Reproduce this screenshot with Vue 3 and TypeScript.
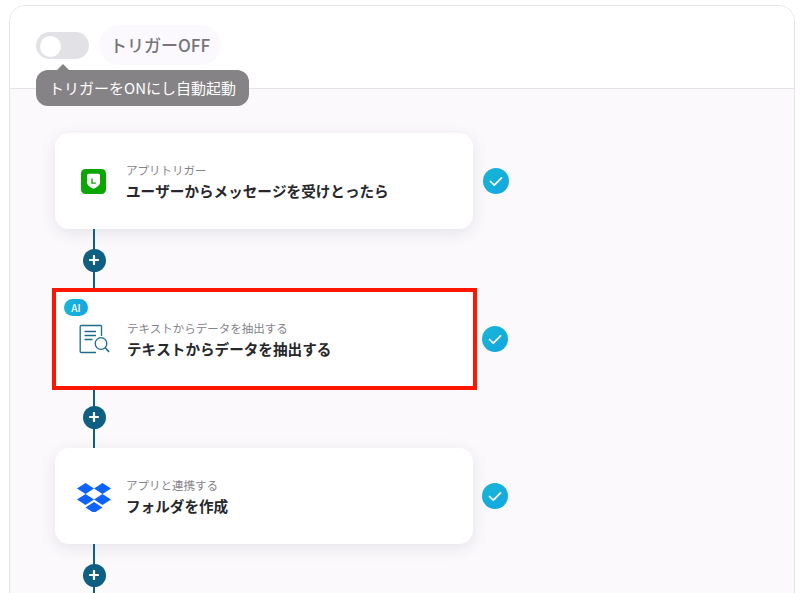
<template>
  <div class="page">
    <section class="panel">
      <header class="panel-head">
        <button class="toggle" type="button" aria-label="トリガー"><span class="knob"></span></button>
        <span class="status">トリガーOFF</span>
        <div class="tooltip">トリガーをONにし自動起動</div>
      </header>
      <div class="flow">
        <template v-for="(step, i) in steps" :key="step.title">
          <div class="step" :class="{ selected: step.selected, last: i === steps.length - 1 }">
            <div class="card">
              <span v-if="step.ai" class="ai-badge">AI</span>
              <div class="card-icon">
                <svg v-if="step.icon === 'line'" width="26" height="26" viewBox="0 0 26 26">
                  <rect x="0" y="1" width="25" height="25" rx="4.500" fill="#0ba600" />
                  <path d="M6 7.500c0-1 .7-1.700 1.700-1.700h9.600c1 0 1.700.7 1.700 1.700v6.800c0 2.900-2.900 5-6.500 6.500C8.900 19.300 6 17.200 6 14.300z" fill="#fff" />
                  <path d="M11 10.500v4.600h3.800" fill="none" stroke="#0ba600" stroke-width="1.400" />
                </svg>
                <svg v-else-if="step.icon === 'extract'" width="32" height="32" viewBox="0 0 32 32" fill="none" stroke="#1c6d8c" stroke-width="1.300">
                  <path d="M22.500 13V3.500c0-.6-.4-1-1-1H2.200c-.6 0-1 .4-1 1v25c0 .6.400 1 1 1H17" />
                  <path d="M5.500 8.500h11.500M5.500 12.500h11.500M5.500 16.500h8" />
                  <circle cx="22" cy="20.500" r="5.800" />
                  <path d="M26.300 24.800l3.700 4.200" stroke-width="1.600" />
                </svg>
                <svg v-else width="34" height="31" viewBox="0 -1.500 34 31" fill="#0d63fb">
                  <path d="M8.500 0.500L17 6 8.500 11.500 0 6z" />
                  <path d="M25.500 0.500L34 6l-8.500 5.500L17 6z" />
                  <path d="M8.500 11.500L17 17l-8.500 5.500L0 17z" />
                  <path d="M25.500 11.500L34 17l-8.500 5.500L17 17z" />
                  <path d="M17 19.500l8.500 5.500L17 30.500 8.500 25z" />
                </svg>
              </div>
              <div class="card-text">
                <span class="card-kind">{{ step.kind }}</span>
                <span class="card-title">{{ step.title }}</span>
              </div>
            </div>
            <span class="check">
              <svg width="14" height="11" viewBox="0 0 14 11" fill="none">
                <path d="M1.500 5.500L5.300 9.200 12.500 1.800" stroke="#fff" stroke-width="1.700" stroke-linecap="round" stroke-linejoin="round" />
              </svg>
            </span>
          </div>
          <div class="connector" :class="'connector-' + i">
            <span class="add">
              <svg width="10" height="10" viewBox="0 0 10 10">
                <path d="M5 1v8M1 5h8" stroke="#fff" stroke-width="2.200" stroke-linecap="round" />
              </svg>
            </span>
          </div>
        </template>
      </div>
    </section>
  </div>
</template>

<script setup lang="ts">
interface Step {
  kind: string
  title: string
  icon: 'line' | 'extract' | 'dropbox'
  ai?: boolean
  selected?: boolean
}

const steps: Step[] = [
  { kind: 'アプリトリガー', title: 'ユーザーからメッセージを受けとったら', icon: 'line' },
  { kind: 'テキストからデータを抽出する', title: 'テキストからデータを抽出する', icon: 'extract', ai: true, selected: true },
  { kind: 'アプリと連携する', title: 'フォルダを作成', icon: 'dropbox' },
]
</script>

<style>
html,
body {
  margin: 0;
  background: #fff;
}
</style>

<style scoped>
.page {
  height: 593px;
  overflow: hidden;
  padding: 5px 9px 0;
  box-sizing: border-box;
  font-family: "Noto Sans CJK JP", "Noto Sans", sans-serif;
}

.panel {
  height: 640px;
  border: 1px solid #e5e5e8;
  border-radius: 16px;
  background: #fbf9fc;
  overflow: hidden;
}

.panel-head {
  position: relative;
  display: flex;
  align-items: center;
  gap: 10px;
  height: 78px;
  padding: 0 26px 4px;
  background: #fff;
  border-bottom: 1px solid #e5e5e8;
}

.toggle {
  width: 53px;
  height: 27px;
  padding: 3px 0 0 4px;
  border: 0;
  border-radius: 14px;
  background: #e2e1e5;
  box-sizing: border-box;
  text-align: left;
}

.knob {
  display: block;
  width: 21px;
  height: 21px;
  border-radius: 50%;
  background: #fff;
}

.status {
  padding: 8px 11px;
  border-radius: 20px;
  background: #fbf9fd;
  color: #77757a;
  font-size: 17px;
  line-height: 24px;
  font-weight: 500;
}

.tooltip {
  position: absolute;
  left: 26px;
  top: 64px;
  padding: 0 13px;
  height: 36px;
  border-radius: 12px;
  background: #868386;
  color: #fff;
  font-size: 15px;
  line-height: 36px;
  white-space: nowrap;
}

.tooltip::before {
  content: "";
  position: absolute;
  left: 20px;
  top: -6px;
  border-left: 7px solid transparent;
  border-right: 7px solid transparent;
  border-bottom: 7px solid #868386;
}

.flow {
  display: flex;
  flex-direction: column;
  padding: 44px 0 0 45px;
}

.step {
  display: flex;
  align-items: center;
  gap: 10px;
}

.step.last {
  gap: 9px;
}

.card {
  position: relative;
  display: flex;
  align-items: center;
  gap: 13px;
  width: 418px;
  height: 96px;
  padding-left: 20px;
  box-sizing: border-box;
  border-radius: 14px;
  background: #fff;
  box-shadow: 0 4px 16px rgba(50, 40, 70, 0.1);
}

.selected {
  margin-left: -3px;
  gap: 5px;
}

.selected .card {
  width: 425px;
  height: 102px;
  padding-left: 20px;
  border: 4px solid #fb1600;
  border-radius: 0;
  box-shadow: none;
}

.ai-badge {
  position: absolute;
  left: 8px;
  top: 7px;
  width: 24px;
  height: 17px;
  border-radius: 9px;
  background: linear-gradient(90deg, #14b8d8, #18a4e0);
  color: #fff;
  font-size: 10px;
  line-height: 17px;
  font-weight: 500;
  text-align: center;
}

.card-icon {
  display: flex;
  align-items: center;
  justify-content: center;
  flex: none;
  width: 38px;
  height: 38px;
}

.card-text {
  display: flex;
  flex-direction: column;
  gap: 1px;
  padding-top: 2px;
}

.card-kind {
  color: #85838a;
  font-size: 11.500px;
  line-height: 17px;
}

.card-title {
  color: #27272b;
  font-size: 14.600px;
  line-height: 22px;
  font-weight: 700;
  font-kerning: none;
}

.check {
  display: flex;
  align-items: center;
  justify-content: center;
  width: 26px;
  height: 26px;
  border-radius: 50%;
  background: linear-gradient(135deg, #17b8d4, #13a5e2);
}

.connector {
  position: relative;
  width: 2px;
  height: 59px;
  margin-left: 38px;
  background: #0f5f82;
}

.connector-1 {
  height: 58px;
}

.add {
  position: absolute;
  left: -10.500px;
  top: 19.500px;
  display: flex;
  align-items: center;
  justify-content: center;
  width: 23px;
  height: 23px;
  border-radius: 50%;
  background: #0f5f82;
}

.connector-1 .add {
  top: 15.500px;
}
</style>
